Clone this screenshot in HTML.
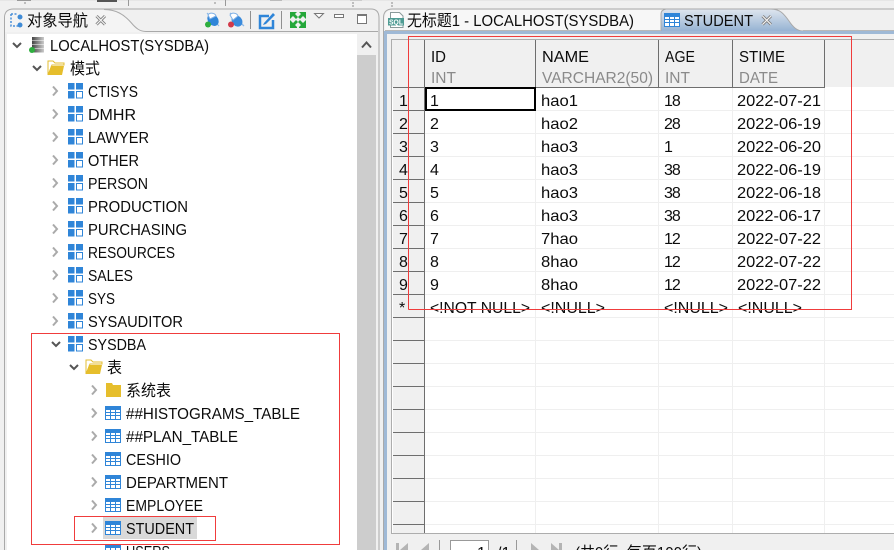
<!DOCTYPE html>
<html lang="zh"><head><meta charset="utf-8"><title>STUDENT</title>
<style>
html,body{margin:0;padding:0;background:#f0f0f0;overflow:hidden}
svg{display:block}
text{font-family:"Liberation Sans","Noto Sans CJK SC",sans-serif;font-size:16px;fill:#0c0c0c}
.g{fill:#8a8a8a}
.n{letter-spacing:-1px}
</style></head><body>
<svg width="894" height="550" viewBox="0 0 894 550" xmlns="http://www.w3.org/2000/svg">
<defs>
<linearGradient id="blue" x1="0" y1="0" x2="0" y2="1"><stop offset="0" stop-color="#dfe6ef"/><stop offset="1" stop-color="#96b3d3"/></linearGradient>
<linearGradient id="srv" x1="0" y1="0" x2="1" y2="0"><stop offset="0" stop-color="#444"/><stop offset="1" stop-color="#ccc"/></linearGradient>
<g id="sch"><rect x="0" y="-8" width="6.500" height="6.500" fill="#2f85d8"/><rect x="8" y="-8" width="7" height="6.500" fill="#2f85d8"/><rect x="0" y="0" width="6.500" height="7.500" fill="#2f85d8"/><rect x="8.500" y="0.500" width="6" height="6.500" fill="#fff" stroke="#2f85d8"/></g>
<g id="tbl"><rect x="0" y="-7" width="16" height="14" fill="#2f85d8"/><g fill="#fff"><rect x="1" y="-3" width="4" height="2"/><rect x="6" y="-3" width="4" height="2"/><rect x="11" y="-3" width="4" height="2"/><rect x="1" y="0" width="4" height="2"/><rect x="6" y="0" width="4" height="2"/><rect x="11" y="0" width="4" height="2"/><rect x="1" y="3" width="4" height="3"/><rect x="6" y="3" width="4" height="3"/><rect x="11" y="3" width="4" height="3"/></g></g>
<path id="cr" d="M0-4.500 4 0 0 4.500" fill="none" stroke="#aaa" stroke-width="2"/>
<path id="cd" d="M-4-2 0 2 4-2" fill="none" stroke="#555" stroke-width="2"/>
<g id="ofd"><path d="M0-7h5l2 2h9v2H4L0 7z" fill="#fff" stroke="#e3bd30"/><path d="M0 7 3-2h13L14 7z" fill="#e6be2c"/></g>
<g id="cfd"><path d="M0-7h6l1 2h8V7H0z" fill="#e6be2c"/></g>
</defs>

<rect width="894" height="550" fill="#f0f0f0"/>
<!-- top strip -->
<rect x="0" y="0" width="894" height="1" fill="#e6e6e6"/>
<rect x="17" y="0" width="14" height="1" fill="#999"/><rect x="97" y="0" width="20" height="2" fill="#555"/><rect x="128" y="0" width="1" height="6" fill="#999"/><rect x="225" y="0" width="1" height="6" fill="#999"/><rect x="270" y="0" width="12" height="1" fill="#bbb"/><rect x="350" y="0" width="12" height="1" fill="#ccc"/>
<g fill="#bdbdbd"><rect x="24" y="2" width="2" height="2"/><rect x="214" y="2" width="2" height="2"/><rect x="352" y="2" width="2" height="2"/><rect x="352" y="5" width="2" height="2"/><rect x="391" y="2" width="2" height="2"/><rect x="391" y="5" width="2" height="2"/></g>

<!-- left panel -->
<path d="M4.500 550V18q0-9 9-9H371q8 0 8 9V550" fill="#f0f0f0" stroke="#a9a9a9"/>
<path d="M5 32V18q0-8 8-8h91c12 0 20 5 27 13 5 6 9 9 15 9z" fill="#f4f4f4"/>
<path d="M104 9.500c12 0 20 5 27 13 5 6 9 9 15 9H378" fill="none" stroke="#a9a9a9"/>
<rect x="7" y="34" width="350" height="516" fill="#fff"/>
<rect x="357" y="34" width="19" height="516" fill="#f0f0f0"/>
<rect x="357" y="55" width="19" height="495" fill="#cdcdcd"/>
<path d="M362 47.500 366.500 42.500 371 47.500" fill="none" stroke="#555" stroke-width="2"/>

<!-- left toolbar -->
<g fill="none" stroke="#4a90d9" stroke-width="1.500" stroke-dasharray="2 1.500"><path d="M11 14v12h7M11 14h7"/></g>
<circle cx="20" cy="17" r="2.500" fill="#3f8bd6"/><circle cx="20" cy="25" r="2.500" fill="#3f8bd6"/>
<text x="27" y="26" textLength="61" lengthAdjust="spacingAndGlyphs">对象导航</text>
<path d="M96.500 16 105 24.500M105 16 96.500 24.500" stroke="#808080" stroke-width="3"/><path d="M96.500 16 105 24.500M105 16 96.500 24.500" stroke="#f4f4f4" stroke-width="1.200"/>
<path d="M207 13 219 26" stroke="#8db9e8" stroke-width="1.200"/><ellipse cx="213" cy="20" rx="5" ry="6.500" transform="rotate(-40 213 20)" fill="#2f85d8"/><path d="M208 15c2-3 7-2 8 1l-6 3z" fill="#fff" stroke="#7fb0e6"/><circle cx="208" cy="24.500" r="3" fill="#2eae3e"/>
<path d="M230 13 244 26" stroke="#8db9e8" stroke-width="1.200"/><ellipse cx="237" cy="21" rx="5" ry="6" transform="rotate(-40 237 21)" fill="#3a8bdc"/><path d="M230 15c2-3 7-2 8 1l-5 4z" fill="#fff" stroke="#7fb0e6"/><circle cx="231" cy="24.500" r="3" fill="#d23a4a"/>
<rect x="250" y="11" width="1" height="18" fill="#909090"/>
<path d="M269 16h-9v12h13v-8" fill="none" stroke="#2f85d8" stroke-width="2.500"/><path d="M264 23l9-10 2 2-9 9-3 1z" fill="#2f85d8"/>
<rect x="281" y="11" width="1" height="18" fill="#909090"/>
<g fill="#25a73a"><path d="M290 12h7l-2 2 3 3-2 2-3-3-2 2-1 1z"/><path d="M306 12h-7l2 2-3 3 2 2 3-3 2 2 1 1z"/><path d="M290 28h-0v-8l1 1 2 2 3-3 2 2-3 3 2 2v1z"/><path d="M306 28v-8l-1 1-2 2-3-3-2 2 3 3-2 2v1z"/></g>
<path d="M314.500 13.500H323.500L319 18z" fill="#fff" stroke="#777"/>
<rect x="334.500" y="14.500" width="9" height="3" fill="#fff" stroke="#777"/>
<rect x="357.500" y="14.500" width="9" height="9" fill="#fff" stroke="#777"/><rect x="357" y="14" width="10" height="2" fill="#777"/>

<!-- tree -->
<use href="#cd" x="17" y="45"/>
<rect x="32" y="37" width="12" height="3.500" fill="url(#srv)"/><rect x="32" y="41" width="12" height="3.500" fill="url(#srv)"/><rect x="32" y="45" width="12" height="3.500" fill="url(#srv)"/><rect x="32" y="49" width="12" height="3.500" fill="url(#srv)"/><circle cx="32" cy="50" r="3" fill="#2eae3e"/>
<text x="50" y="51" textLength="159" lengthAdjust="spacingAndGlyphs">LOCALHOST(SYSDBA)</text>
<use href="#cd" x="37" y="68"/><use href="#ofd" x="48" y="68"/>
<text x="70" y="74" textLength="30" lengthAdjust="spacingAndGlyphs">模式</text>

<use href="#cr" x="53" y="91"/><use href="#sch" x="68" y="91"/><text x="88" y="97" textLength="50" lengthAdjust="spacingAndGlyphs">CTISYS</text>
<use href="#cr" x="53" y="114"/><use href="#sch" x="68" y="114"/><text x="88" y="120" textLength="48" lengthAdjust="spacingAndGlyphs">DMHR</text>
<use href="#cr" x="53" y="137"/><use href="#sch" x="68" y="137"/><text x="88" y="143" textLength="61" lengthAdjust="spacingAndGlyphs">LAWYER</text>
<use href="#cr" x="53" y="160"/><use href="#sch" x="68" y="160"/><text x="88" y="166" textLength="51" lengthAdjust="spacingAndGlyphs">OTHER</text>
<use href="#cr" x="53" y="183"/><use href="#sch" x="68" y="183"/><text x="88" y="189" textLength="60" lengthAdjust="spacingAndGlyphs">PERSON</text>
<use href="#cr" x="53" y="206"/><use href="#sch" x="68" y="206"/><text x="88" y="212" textLength="100" lengthAdjust="spacingAndGlyphs">PRODUCTION</text>
<use href="#cr" x="53" y="229"/><use href="#sch" x="68" y="229"/><text x="88" y="235" textLength="99" lengthAdjust="spacingAndGlyphs">PURCHASING</text>
<use href="#cr" x="53" y="252"/><use href="#sch" x="68" y="252"/><text x="88" y="258" textLength="87" lengthAdjust="spacingAndGlyphs">RESOURCES</text>
<use href="#cr" x="53" y="275"/><use href="#sch" x="68" y="275"/><text x="88" y="281" textLength="45" lengthAdjust="spacingAndGlyphs">SALES</text>
<use href="#cr" x="53" y="298"/><use href="#sch" x="68" y="298"/><text x="88" y="304" textLength="27" lengthAdjust="spacingAndGlyphs">SYS</text>
<use href="#cr" x="53" y="321"/><use href="#sch" x="68" y="321"/><text x="88" y="327" textLength="95" lengthAdjust="spacingAndGlyphs">SYSAUDITOR</text>
<use href="#cd" x="56" y="344"/><use href="#sch" x="68" y="344"/><text x="88" y="350" textLength="58" lengthAdjust="spacingAndGlyphs">SYSDBA</text>
<use href="#cd" x="74" y="367"/><use href="#ofd" x="86" y="367"/><text x="107" y="373" textLength="15" lengthAdjust="spacingAndGlyphs">表</text>
<use href="#cr" x="92" y="390"/><use href="#cfd" x="106" y="390"/><text x="126" y="396" textLength="45" lengthAdjust="spacingAndGlyphs">系统表</text>
<use href="#cr" x="92" y="413"/><use href="#tbl" x="105" y="413"/><text x="126" y="419" textLength="174" lengthAdjust="spacingAndGlyphs">##HISTOGRAMS_TABLE</text>
<use href="#cr" x="92" y="436"/><use href="#tbl" x="105" y="436"/><text x="126" y="442" textLength="112" lengthAdjust="spacingAndGlyphs">##PLAN_TABLE</text>
<use href="#cr" x="92" y="459"/><use href="#tbl" x="105" y="459"/><text x="126" y="465" textLength="55" lengthAdjust="spacingAndGlyphs">CESHIO</text>
<use href="#cr" x="92" y="482"/><use href="#tbl" x="105" y="482"/><text x="126" y="488" textLength="102" lengthAdjust="spacingAndGlyphs">DEPARTMENT</text>
<use href="#cr" x="92" y="505"/><use href="#tbl" x="105" y="505"/><text x="126" y="511" textLength="77" lengthAdjust="spacingAndGlyphs">EMPLOYEE</text>
<rect x="103" y="517" width="94" height="22" fill="#d9d9d9"/>
<use href="#cr" x="92" y="528"/><use href="#tbl" x="105" y="528"/><text x="126" y="534" textLength="68" lengthAdjust="spacingAndGlyphs">STUDENT</text>
<use href="#tbl" x="105" y="551"/><text x="126" y="557" textLength="44" lengthAdjust="spacingAndGlyphs">USERS</text>

<!-- right panel -->
<path d="M383.500 550V18q0-9 9-9H894" fill="#f0f0f0" stroke="#a9a9a9"/>
<path d="M385 31V18q0-8 8-8H661V31z" fill="#f7f7f7"/>
<path d="M661 31V14q0-4 5-5h105c9 0 13 5 18 12 4 6 8 10 14 10z" fill="url(#blue)"/>
<path d="M661 31V14q0-4 5-5h105c9 0 13 5 18 12 4 6 8 10 14 10" fill="none" stroke="#a9a9a9"/>
<rect x="384" y="31" width="510" height="3" fill="#9fb9d6"/>
<rect x="385" y="30" width="276" height="1" fill="#b8b8b8"/>
<rect x="803" y="30" width="91" height="1" fill="#b8b8b8"/>
<rect x="384" y="31" width="3" height="519" fill="#9fb9d6"/>

<!-- sql icon -->
<path d="M390.500 12.500h9l3.500 3.500v11.500h-12.500z" fill="#fff" stroke="#8a9a9a"/><rect x="388" y="18" width="16" height="7.500" fill="#4f9c94"/><text x="389" y="24.500" style="font-size:7.500px;font-weight:bold;fill:#fff" textLength="14" lengthAdjust="spacingAndGlyphs">SQL</text>
<text x="407" y="26" textLength="227" lengthAdjust="spacingAndGlyphs">无标题1 - LOCALHOST(SYSDBA)</text>
<use href="#tbl" x="664" y="20"/>
<text x="684" y="26" textLength="69" lengthAdjust="spacingAndGlyphs">STUDENT</text>
<path d="M762.500 16 771 24.500M771 16 762.500 24.500" stroke="#808080" stroke-width="3"/><path d="M762.500 16 771 24.500M771 16 762.500 24.500" stroke="#f4f4f4" stroke-width="1.200"/>

<!-- grid -->
<rect x="391.500" y="39.500" width="520" height="494" fill="#fff" stroke="#adadad"/>
<rect x="392" y="40" width="502" height="47" fill="#f0f0f0"/>
<rect x="393" y="88" width="31" height="445" fill="#f0f0f0"/>
<g fill="#efefef">
<rect x="535" y="88" width="1" height="445"/><rect x="658" y="88" width="1" height="445"/><rect x="732" y="88" width="1" height="445"/><rect x="824" y="88" width="1" height="445"/>
<rect x="425" y="110" width="469" height="1"/><rect x="425" y="133" width="469" height="1"/><rect x="425" y="156" width="469" height="1"/><rect x="425" y="179" width="469" height="1"/><rect x="425" y="202" width="469" height="1"/><rect x="425" y="225" width="469" height="1"/><rect x="425" y="248" width="469" height="1"/><rect x="425" y="271" width="469" height="1"/><rect x="425" y="294" width="469" height="1"/><rect x="425" y="317" width="469" height="1"/><rect x="425" y="340" width="469" height="1"/><rect x="425" y="363" width="469" height="1"/><rect x="425" y="386" width="469" height="1"/><rect x="425" y="409" width="469" height="1"/><rect x="425" y="432" width="469" height="1"/><rect x="425" y="455" width="469" height="1"/><rect x="425" y="478" width="469" height="1"/><rect x="425" y="501" width="469" height="1"/><rect x="425" y="524" width="469" height="1"/>
</g>
<g fill="#6e6e6e">
<rect x="393" y="87" width="432" height="1"/>
<rect x="424" y="40" width="1" height="493"/><rect x="535" y="40" width="1" height="47"/><rect x="658" y="40" width="1" height="47"/><rect x="732" y="40" width="1" height="47"/><rect x="824" y="40" width="1" height="47"/>
<rect x="393" y="110" width="31" height="1"/><rect x="393" y="133" width="31" height="1"/><rect x="393" y="156" width="31" height="1"/><rect x="393" y="179" width="31" height="1"/><rect x="393" y="202" width="31" height="1"/><rect x="393" y="225" width="31" height="1"/><rect x="393" y="248" width="31" height="1"/><rect x="393" y="271" width="31" height="1"/><rect x="393" y="294" width="31" height="1"/><rect x="393" y="317" width="31" height="1"/><rect x="393" y="340" width="31" height="1"/><rect x="393" y="363" width="31" height="1"/><rect x="393" y="386" width="31" height="1"/><rect x="393" y="409" width="31" height="1"/><rect x="393" y="432" width="31" height="1"/><rect x="393" y="455" width="31" height="1"/><rect x="393" y="478" width="31" height="1"/><rect x="393" y="501" width="31" height="1"/><rect x="393" y="524" width="31" height="1"/>
</g>
<rect x="426" y="88" width="109" height="22" fill="#fff" stroke="#000" stroke-width="2"/>

<text x="431" y="62" textLength="15" lengthAdjust="spacingAndGlyphs">ID</text><text x="431" y="83" class="g" textLength="25" lengthAdjust="spacingAndGlyphs">INT</text>
<text x="542" y="62" textLength="47" lengthAdjust="spacingAndGlyphs">NAME</text><text x="542" y="83" class="g" textLength="111" lengthAdjust="spacingAndGlyphs">VARCHAR2(50)</text>
<text x="665" y="62" textLength="30" lengthAdjust="spacingAndGlyphs">AGE</text><text x="665" y="83" class="g" textLength="25" lengthAdjust="spacingAndGlyphs">INT</text>
<text x="739" y="62" textLength="46" lengthAdjust="spacingAndGlyphs">STIME</text><text x="739" y="83" class="g" textLength="39" lengthAdjust="spacingAndGlyphs">DATE</text>

<text x="399" y="106">1</text><text x="430" y="106">1</text><text x="541" y="106" textLength="37" lengthAdjust="spacingAndGlyphs">hao1</text><text x="664" y="106" class="n">18</text><text x="737" y="106" textLength="84" lengthAdjust="spacingAndGlyphs">2022-07-21</text>
<text x="399" y="129">2</text><text x="430" y="129">2</text><text x="541" y="129" textLength="37" lengthAdjust="spacingAndGlyphs">hao2</text><text x="664" y="129" class="n">28</text><text x="737" y="129" textLength="84" lengthAdjust="spacingAndGlyphs">2022-06-19</text>
<text x="399" y="152">3</text><text x="430" y="152">3</text><text x="541" y="152" textLength="37" lengthAdjust="spacingAndGlyphs">hao3</text><text x="664" y="152">1</text><text x="737" y="152" textLength="84" lengthAdjust="spacingAndGlyphs">2022-06-20</text>
<text x="399" y="175">4</text><text x="430" y="175">4</text><text x="541" y="175" textLength="37" lengthAdjust="spacingAndGlyphs">hao3</text><text x="664" y="175" class="n">38</text><text x="737" y="175" textLength="84" lengthAdjust="spacingAndGlyphs">2022-06-19</text>
<text x="399" y="198">5</text><text x="430" y="198">5</text><text x="541" y="198" textLength="37" lengthAdjust="spacingAndGlyphs">hao3</text><text x="664" y="198" class="n">38</text><text x="737" y="198" textLength="84" lengthAdjust="spacingAndGlyphs">2022-06-18</text>
<text x="399" y="221">6</text><text x="430" y="221">6</text><text x="541" y="221" textLength="37" lengthAdjust="spacingAndGlyphs">hao3</text><text x="664" y="221" class="n">38</text><text x="737" y="221" textLength="84" lengthAdjust="spacingAndGlyphs">2022-06-17</text>
<text x="399" y="244">7</text><text x="430" y="244">7</text><text x="541" y="244" textLength="37" lengthAdjust="spacingAndGlyphs">7hao</text><text x="664" y="244" class="n">12</text><text x="737" y="244" textLength="84" lengthAdjust="spacingAndGlyphs">2022-07-22</text>
<text x="399" y="267">8</text><text x="430" y="267">8</text><text x="541" y="267" textLength="37" lengthAdjust="spacingAndGlyphs">8hao</text><text x="664" y="267" class="n">12</text><text x="737" y="267" textLength="84" lengthAdjust="spacingAndGlyphs">2022-07-22</text>
<text x="399" y="290">9</text><text x="430" y="290">9</text><text x="541" y="290" textLength="37" lengthAdjust="spacingAndGlyphs">8hao</text><text x="664" y="290" class="n">12</text><text x="737" y="290" textLength="84" lengthAdjust="spacingAndGlyphs">2022-07-22</text>
<text x="399" y="313">*</text><text x="430" y="313" textLength="100" lengthAdjust="spacingAndGlyphs">&lt;!NOT NULL&gt;</text><text x="541" y="313" textLength="64" lengthAdjust="spacingAndGlyphs">&lt;!NULL&gt;</text><text x="664" y="313" textLength="64" lengthAdjust="spacingAndGlyphs">&lt;!NULL&gt;</text><text x="738" y="313" textLength="64" lengthAdjust="spacingAndGlyphs">&lt;!NULL&gt;</text>

<!-- pagination -->
<g fill="#b4b4b4"><rect x="396" y="543" width="3" height="7"/><path d="M408 543v7h-8zM429 543v7h-8zM531 543v7h8zM551 543v7h8z"/><rect x="559" y="543" width="3" height="7"/></g>
<rect x="439" y="540" width="1" height="10" fill="#999"/><rect x="516" y="540" width="1" height="10" fill="#999"/>
<rect x="450.500" y="540.500" width="38" height="14" fill="#fff" stroke="#999"/>
<text x="477" y="558">1</text><text x="497" y="558">/1</text>
<text x="575" y="558" textLength="127" lengthAdjust="spacingAndGlyphs">(共9行, 每页100行)</text>

<!-- red annotation boxes -->
<g fill="none" stroke="#f03c3c" stroke-width="1">
<rect x="31.500" y="333.500" width="308" height="211"/>
<rect x="74.500" y="516.500" width="141" height="24"/>
<path d="M408.500 309.500V36.500H851.500V309.500H408.500"/>
</g>
</svg>
</body></html>
